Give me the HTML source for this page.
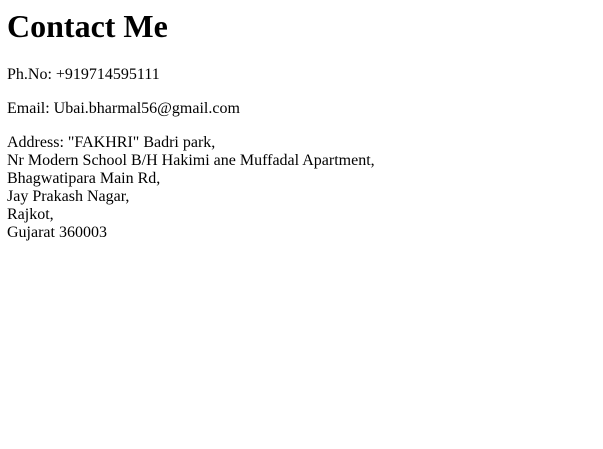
<!DOCTYPE html>
<html><head><style>
body{margin:8px 7px;font-family:"Liberation Serif",serif;font-size:16px;color:#000;background:#fff}
h1{font-size:32px;margin:5px 0 21px 0;line-height:37px}
p{margin:16px 0;font-size:16px}
</style></head><body>
<h1>Contact Me</h1>
<p>Ph.No: +919714595111</p>
<p>Email: Ubai.bharmal56@gmail.com</p>
<p>Address: "FAKHRI" Badri park,<br>Nr Modern School B/H Hakimi ane Muffadal Apartment,<br>Bhagwatipara Main Rd,<br>Jay Prakash Nagar,<br>Rajkot,<br>Gujarat 360003</p>
</body></html>
